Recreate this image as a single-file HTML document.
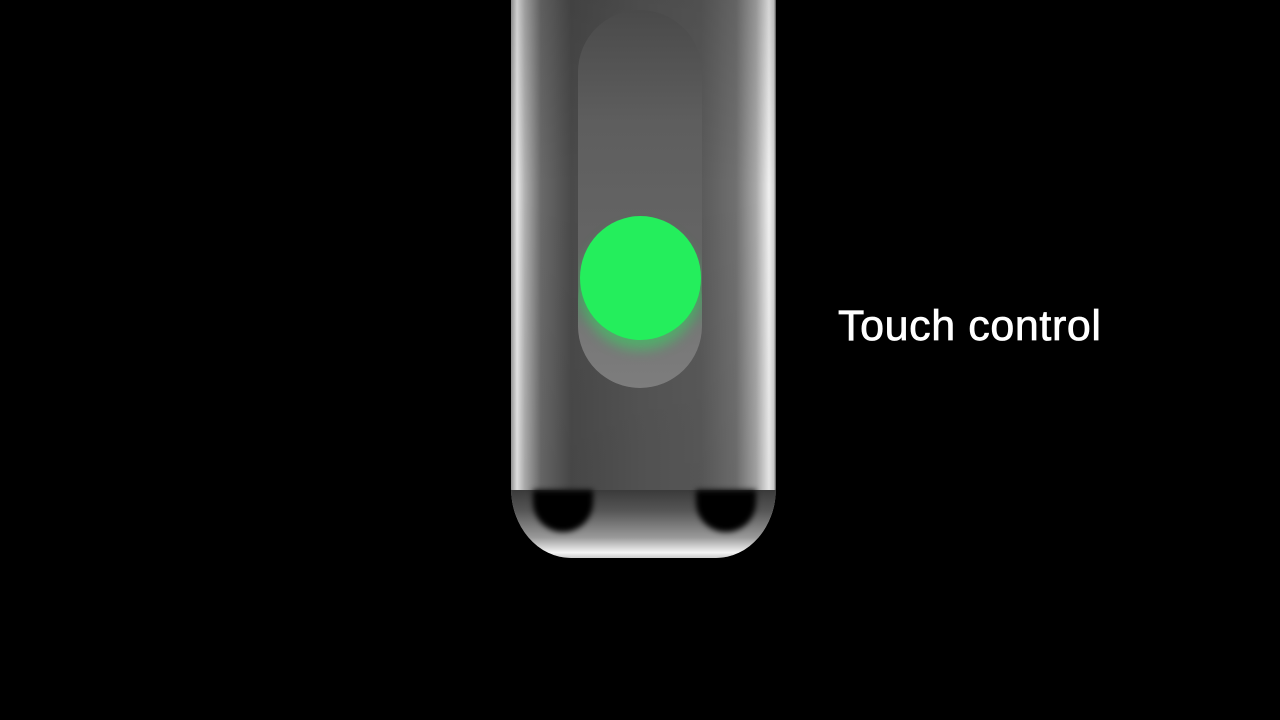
<!DOCTYPE html>
<html><head><meta charset="utf-8"><style>
html,body{margin:0;padding:0;background:#000;width:1280px;height:720px;overflow:hidden;position:relative}
.body{position:absolute;left:511px;top:-60px;width:265px;height:618px;border-radius:0 0 60px 60px/0 0 70px 70px;
background:linear-gradient(90deg,#9a9a9a 0px,#e8e8e8 6px,#b0b0b0 14px,#6a6a6a 30px,#4a4a4a 60px,#555 130px,#5a5a5a 190px,#707070 225px,#a8a8a8 245px,#f0f0f0 258px,#d0d0d0 263px,#555 265px);overflow:hidden}
.shade{position:absolute;left:0;top:0;width:100%;height:100%;background:linear-gradient(180deg,rgba(0,0,0,.15),rgba(0,0,0,0) 40%,rgba(0,0,0,.05) 85%)}
.cap{position:absolute;left:0;top:550px;width:100%;height:68px;background:linear-gradient(180deg,#3a3a3a 0,#555 30%,#9a9a9a 70%,#f5f5f5 92%,#ccc 100%)}
.hole{position:absolute;top:550px;width:60px;height:42px;background:#000;border-radius:0 0 30px 30px;filter:blur(3px)}
.pill{position:absolute;left:578px;top:10px;width:124px;height:378px;border-radius:62px;
background:linear-gradient(180deg,#4a4a4a 0,#5e5e5e 30%,#666 70%,#6a6a6a 100%);overflow:hidden}
.ghost{position:absolute;left:0;top:230px;width:124px;height:148px;border-radius:62px;background:linear-gradient(180deg,#3a8a55,#777 60%,#7d7d7d)}
.dot{position:absolute;left:2px;top:206px;width:121px;height:124px;border-radius:50%;background:#24ee5c;box-shadow:0 10px 12px rgba(36,238,92,.45)}
.t{position:absolute;left:838px;top:302px;font:43px "Liberation Sans",sans-serif;color:#fff;letter-spacing:0.6px;-webkit-text-stroke:0.7px #fff;white-space:nowrap}
</style></head><body>
<div class="body"><div class="shade"></div><div class="cap"></div>
<div class="hole" style="left:22px"></div><div class="hole" style="left:185px"></div></div>
<div class="pill"><div class="ghost"></div><div class="dot"></div></div>
<div class="t">Touch control</div>
</body></html>
